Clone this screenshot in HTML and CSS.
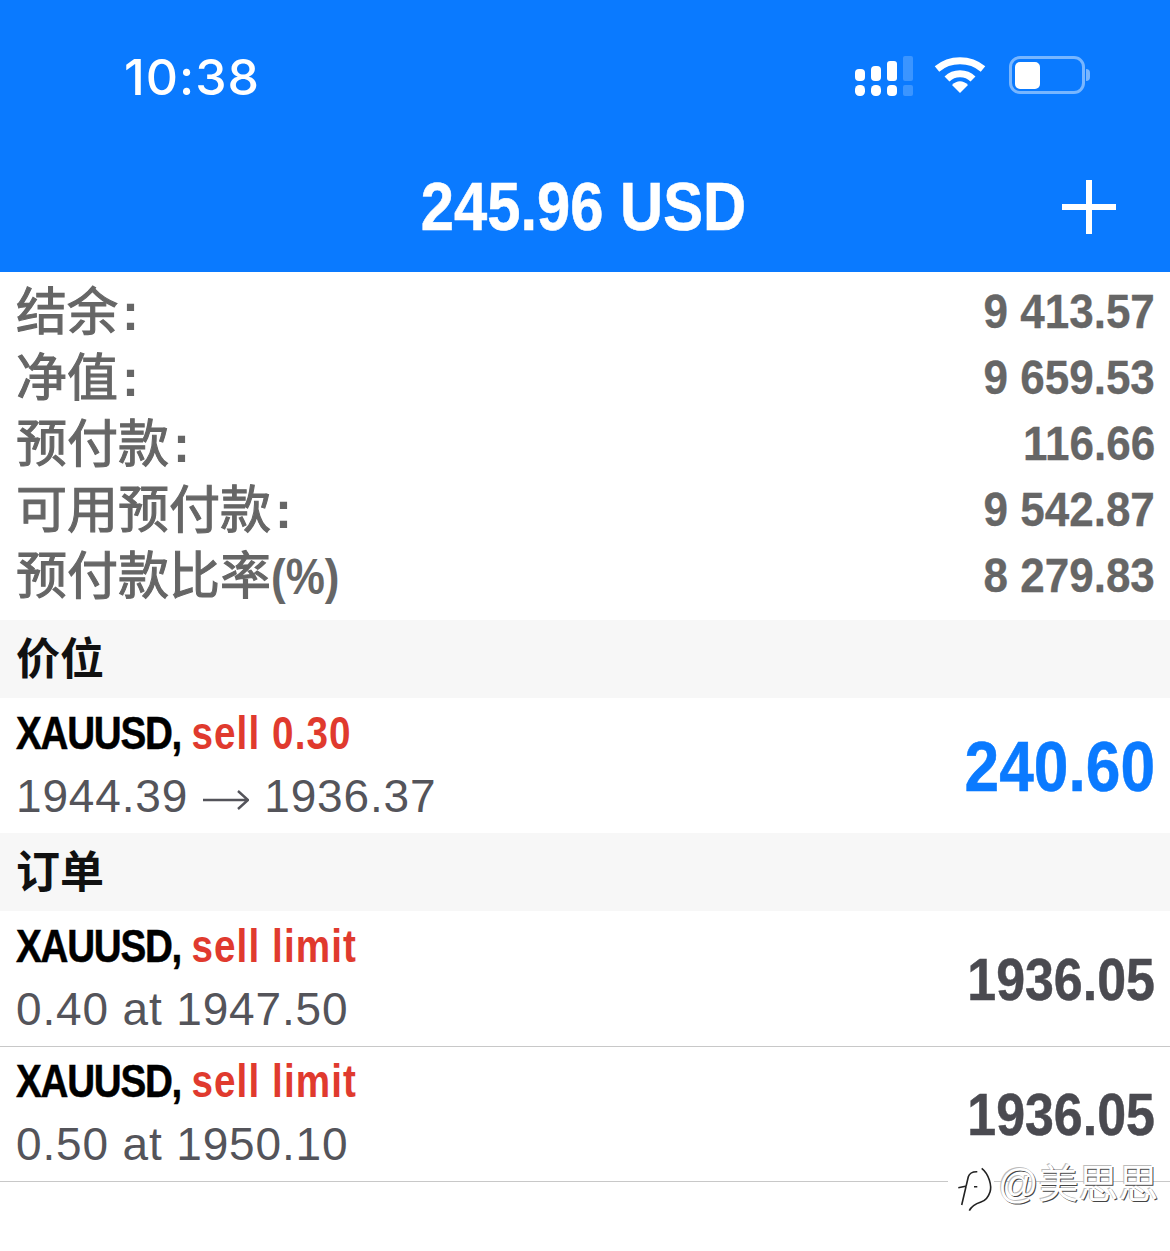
FILE: index.html
```html
<!DOCTYPE html>
<html lang="zh-CN">
<head>
  <meta charset="UTF-8">
  <title>Trade</title>
  <link rel="stylesheet" href="styles.css">
</head>
<body>

  <!-- Cabecalho azul -->
  <header class="topo">
    <div class="status">
      <span class="hora">10:38</span>
      <div class="icones">
        <svg class="sinal" width="60" height="44" viewBox="0 0 60 44">
          <g fill="#fff">
            <rect x="2" y="14" width="10" height="12" rx="4"/>
            <rect x="2" y="30" width="10" height="11" rx="4.5"/>
            <rect x="18" y="11" width="10" height="15" rx="4"/>
            <rect x="18" y="30" width="10" height="11" rx="4.5"/>
            <rect x="34" y="6" width="10" height="20" rx="3"/>
            <rect x="34" y="30" width="10" height="11" rx="4"/>
          </g>
          <g fill="#fff" opacity="0.2">
            <rect x="50" y="1" width="10" height="25" rx="2"/>
            <rect x="50" y="30" width="10" height="11" rx="2"/>
          </g>
        </svg>
        <svg class="wifi" width="52" height="40" viewBox="0 0 52 40">
          <path d="M3 14 C16 3 36 3 49 14" fill="none" stroke="#fff" stroke-width="7"/>
          <path d="M13 24 C20 17 32 17 39 24" fill="none" stroke="#fff" stroke-width="7"/>
          <path d="M18 30 C23 25 29 25 34 30 L26 38 Z" fill="#fff"/>
        </svg>
        <div class="bateria">
          <div class="carga"></div>
        </div>
        <div class="polo"></div>
      </div>
    </div>
    <div class="barra">
      <h1 class="saldo">245.96 USD</h1>
      <svg class="mais" width="54" height="54" viewBox="0 0 54 54">
        <path d="M27 0 V54 M0 27 H54" stroke="#fff" stroke-width="6"/>
      </svg>
    </div>
  </header>

  <!-- Resumo da conta -->
  <section class="resumo">
    <div class="linha"><span>结余<i>:</i></span><b>9 413.57</b></div>
    <div class="linha"><span>净值<i>:</i></span><b>9 659.53</b></div>
    <div class="linha"><span>预付款<i>:</i></span><b>116.66</b></div>
    <div class="linha"><span>可用预付款<i>:</i></span><b>9 542.87</b></div>
    <div class="linha"><span>预付款比率<em>(%)</em></span><b>8 279.83</b></div>
  </section>

  <h2 class="secao">价位</h2>
  <div class="item">
    <div>
      <p class="titulo">XAUUSD, <span class="venda">sell 0.30</span></p>
      <p class="detalhe">1944.39<svg class="seta" width="46" height="24" viewBox="0 0 46 24"><path d="M0 12 H45 M35 3 L45 12 L35 21" fill="none" stroke="#54545a" stroke-width="2.4"/></svg>1936.37</p>
    </div>
    <div class="lucro">240.60</div>
  </div>

  <h2 class="secao">订单</h2>
  <div class="item borda">
    <div>
      <p class="titulo">XAUUSD, <span class="venda">sell limit</span></p>
      <p class="detalhe">0.40 at 1947.50</p>
    </div>
    <div class="preco">1936.05</div>
  </div>
  <div class="item borda">
    <div>
      <p class="titulo">XAUUSD, <span class="venda">sell limit</span></p>
      <p class="detalhe">0.50 at 1950.10</p>
    </div>
    <div class="preco">1936.05</div>
  </div>

  <!-- Marca d'agua -->
  <div class="marca">
    <svg class="logo" width="46" height="52" viewBox="-8 0 46 52">
      <path d="M5.7 43 L12.3 14.7 C13.5 11 16 9.5 21.3 9.7 M2.3 25.7 L10.7 24 M18 24.7 H21.3" fill="none" stroke="#222" stroke-width="1.6"/>
      <path d="M25.7 6.3 C33 12 36 24 34 30 C32 36 29 39 25 40 C19 42 15 45 13.3 48.7" fill="none" stroke="#222" stroke-width="1.6"/>
    </svg>
    <span>@美思思</span>
  </div>

</body>
</html>
```

FILE: styles.css
```css
* {
  box-sizing: border-box;
  margin: 0;
  padding: 0;
}

body {
  position: relative;
  height: 1251px;
  overflow: hidden;
  background: #fff;
  font-family: "Liberation Sans", "Noto Sans CJK SC", sans-serif;
}

.topo {
  height: 272px;
  background: #0a7aff;
  color: #fff;
}

.status {
  height: 140px;
  padding: 46px 80px 0 124px;
  display: flex;
  justify-content: space-between;
  align-items: flex-start;
}

.hora {
  font-family: Inter, sans-serif;
  font-size: 50px;
  font-weight: 500;
  line-height: 62px;
  letter-spacing: 1px;
}

.icones {
  display: flex;
  align-items: center;
  gap: 21px;
  height: 60px;
  margin-top: -1px;
}

.sinal {
  margin-top: 4px;
}

.bateria {
  width: 76px;
  height: 38px;
  margin-left: 2px;
  padding: 3px 3px 2px;
  border: 3px solid rgba(255, 255, 255, 0.45);
  border-radius: 11px;
}

.carga {
  width: 25px;
  height: 100%;
  background: #fff;
  border-radius: 5px;
}

.polo {
  width: 4px;
  height: 12px;
  margin-left: -20px;
  background: rgba(255, 255, 255, 0.45);
  border-radius: 0 6px 6px 0;
}

.barra {
  height: 132px;
  padding: 0 54px 0 0;
  display: flex;
  align-items: flex-start;
  justify-content: flex-end;
  position: relative;
}

.saldo {
  position: absolute;
  left: 0;
  right: 3px;
  top: 26px;
  text-align: center;
  font-size: 68px;
  line-height: 80px;
  -webkit-text-stroke: 0.6px #fff;
  transform: scaleX(0.878);
}

.mais {
  margin-top: 40px;
}

.resumo {
  height: 348px;
  padding-top: 7px;
}

.linha {
  height: 66px;
  padding: 0 16px;
  display: flex;
  justify-content: space-between;
  align-items: center;
  color: #666;
  font-size: 51px;
}

.linha span {
  padding-bottom: 9px;
  -webkit-text-stroke: 1.1px #666;
}

.linha i {
  margin-left: 4px;
  font-style: normal;
  font-weight: 700;
  -webkit-text-stroke: 0;
}

.linha em {
  display: inline-block;
  font-style: normal;
  font-weight: 700;
  font-size: 50px;
  -webkit-text-stroke: 0;
  transform: scaleX(0.88);
  transform-origin: left center;
}

.linha b {
  margin-right: -1px;
  padding-bottom: 2px;
  font-size: 48px;
  -webkit-text-stroke: 0.3px #666;
  transform: scaleX(0.917);
  transform-origin: right center;
}

.secao {
  height: 78px;
  padding: 0 16px;
  background: #f7f7f7;
  color: #111;
  font-size: 44px;
  font-weight: 700;
  line-height: 80px;
}

.item {
  height: 134px;
  padding: 0 16px 2px;
  display: flex;
  justify-content: space-between;
  align-items: center;
}

.item + .secao {
  margin-top: 1px;
}

.borda {
  height: 136px;
  border-bottom: 1px solid #c8c8c8;
}

.borda + .borda {
  height: 135px;
  padding-bottom: 3px;
}

.titulo {
  font-size: 46px;
  line-height: 50px;
  font-weight: 700;
  color: #000;
  letter-spacing: -1.5px;
  -webkit-text-stroke: 0.5px #000;
  white-space: nowrap;
  transform: scaleX(0.84);
  transform-origin: left center;
}

.venda {
  margin-left: 1px;
  color: #e03a2e;
  letter-spacing: 1.3px;
  -webkit-text-stroke: 0;
}

.detalhe {
  margin-top: 13px;
  font-size: 46px;
  line-height: 50px;
  color: #54545a;
  letter-spacing: 0.85px;
  white-space: nowrap;
}

.seta {
  margin: 0 15px;
}

.lucro {
  margin-top: 5px;
  margin-right: -1px;
  font-size: 70px;
  font-weight: 700;
  color: #0a7aff;
  -webkit-text-stroke: 0.5px #0a7aff;
  transform: scaleX(0.89);
  transform-origin: right center;
}

.preco {
  margin-top: 3px;
  margin-right: -1px;
  font-size: 60px;
  font-weight: 700;
  color: #4a4a50;
  -webkit-text-stroke: 0.5px #4a4a50;
  transform: scaleX(0.865);
  transform-origin: right center;
}

.marca {
  position: absolute;
  left: 948px;
  top: 1162px;
  display: flex;
  align-items: flex-start;
  gap: 4px;
  font-size: 40px;
  line-height: 44px;
  color: #fff;
  text-shadow: 1px 1px 0 #444, -1px -1px 0 #bbb;
}

.logo {
  background: #fff;
}
```
